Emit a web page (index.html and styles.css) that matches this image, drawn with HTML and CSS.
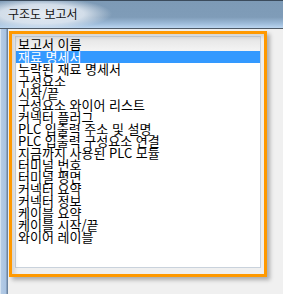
FILE: index.html
```
<!DOCTYPE html>
<html lang="ko">
<head>
<meta charset="utf-8">
<link rel="stylesheet" href="styles.css">
</head>
<body>
<div class="window">
  <div class="titlebar"><span class="title">구조도 보고서</span></div>
  <div class="main">
    <div class="frame-left"></div>
    <div class="content">
      <div class="listbox">
        <div class="header">보고서 이름</div>
        <div class="item selected">재료 명세서</div>
        <div class="item">누락된 재료 명세서</div>
        <div class="item">구성요소</div>
        <div class="item">시작/끝</div>
        <div class="item">구성요소 와이어 리스트</div>
        <div class="item">커넥터 플러그</div>
        <div class="item">PLC 입출력 주소 및 설명</div>
        <div class="item">PLC 입출력 구성요소 연결</div>
        <div class="item">지금까지 사용된 PLC 모듈</div>
        <div class="item">터미널 번호</div>
        <div class="item">터미널 평면</div>
        <div class="item">커넥터 요약</div>
        <div class="item">커넥터 정보</div>
        <div class="item">케이블 요약</div>
        <div class="item">케이블 시작/끝</div>
        <div class="item">와이어 레이블</div>
      </div>
    </div>
  </div>
  <div class="highlight"></div>
</div>
</body>
</html>
```
FILE: styles.css
```
* { box-sizing: border-box; }
html, body {
  margin: 0;
  padding: 0;
  width: 283px;
  height: 294px;
  overflow: hidden;
  background: #f0f0f0;
  font-family: "Noto Sans CJK KR", "Noto Sans", sans-serif;
}
.window {
  position: relative;
  width: 283px;
  height: 294px;
  display: flex;
  flex-direction: column;
}
.titlebar {
  height: 29px;
  flex: none;
  border-top: 1px solid #3b4b5c;
  border-bottom: 1px solid #4e5965;
  background:
    radial-gradient(ellipse 70px 16px at 42px 13px, rgba(235,240,246,0.95) 0%, rgba(225,233,242,0.85) 60%, rgba(225,233,242,0) 100%),
    linear-gradient(to bottom, #7d9ab6 0%, #7f9cb8 60%, #9fbddb 85%, #bcd6f0 100%);
  display: flex;
  align-items: center;
  padding-left: 8px;
}
.title {
  font-size: 12px;
  line-height: 14px;
  color: #111;
  margin-top: -1px;
}
.main {
  flex: 1;
  display: flex;
}
.frame-left {
  width: 8px;
  flex: none;
  background: linear-gradient(to right, #d5e3f1 0px, #d5e3f1 1px, #b4cbe5 1px, #a9c3e2 6px, #6c84a0 7px, #6c84a0 8px);
}
.content {
  flex: 1;
  padding: 7px 0 0 7px;
}
.listbox {
  width: 246px;
  height: 232px;
  border: 1px solid #c9d2dc;
  background: #fff;
  font-size: 13px;
  color: #000;
  overflow: hidden;
}
.header {
  height: 14px;
  line-height: 14px;
  padding-left: 2px;
  background: linear-gradient(to bottom, #e4e4e4, #f4f4f4);
  white-space: nowrap;
}
.item {
  height: 12px;
  line-height: 12px;
  padding-left: 2px;
  white-space: nowrap;
}
.item.selected {
  background: #3399ff;
  color: #fff;
}
.highlight {
  position: absolute;
  left: 9px;
  top: 31px;
  width: 258px;
  height: 246px;
  border: 3px solid #ff9900;
  box-shadow: 3px 3px 4px rgba(0,0,0,0.28), inset 3px 3px 4px rgba(0,0,0,0.12);
  pointer-events: none;
}
```
